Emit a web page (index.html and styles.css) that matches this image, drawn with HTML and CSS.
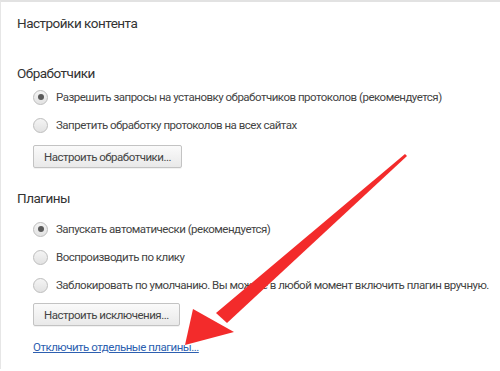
FILE: index.html
```html
<!DOCTYPE html>
<html>
<head>
<meta charset="utf-8">
<link rel="stylesheet" href="styles.css">
</head>
<body>
<div class="page">
  <h1 class="title">Настройки контента</h1>
  <section class="section handlers">
    <h2 class="section-title">Обработчики</h2>
    <div class="option"><span class="radio checked"></span><span>Разрешить запросы на установку обработчиков протоколов (рекомендуется)</span></div>
    <div class="option"><span class="radio"></span><span>Запретить обработку протоколов на всех сайтах</span></div>
    <button class="btn">Настроить обработчики...</button>
  </section>
  <section class="section plugins">
    <h2 class="section-title">Плагины</h2>
    <div class="option"><span class="radio checked"></span><span>Запускать автоматически (рекомендуется)</span></div>
    <div class="option"><span class="radio"></span><span>Воспроизводить по клику</span></div>
    <div class="option"><span class="radio"></span><span>Заблокировать по умолчанию. Вы можете в любой момент включить плагин вручную.</span></div>
    <button class="btn">Настроить исключения...</button>
    <a class="link" href="#">Отключить отдельные плагины...</a>
  </section>
</div>
<svg class="arrow" width="500" height="371" viewBox="0 0 500 371">
  <polygon fill="#f32b2b" points="405,154 407,156 227,323 216,313"/>
  <polygon fill="#f32b2b" points="185,345 193,309 234,332"/>
</svg>
</body>
</html>
```
FILE: styles.css
```css
html, body {
  margin: 0;
  padding: 0;
  background: #fff;
}
body {
  width: 500px;
  height: 371px;
  overflow: hidden;
  position: relative;
  font-family: Roboto, "Open Sans", sans-serif;
  color: #333;
  font-size: 11.5px;
  letter-spacing: -0.5px;
}
.page {
  border-top: 2px solid #e2e2e2;
  border-left: 1px solid #e6e6e6;
  height: 369px;
  box-sizing: border-box;
  padding: 0 0 0 16px;
}
.title {
  margin: 0;
  font-weight: normal;
  font-size: 13.5px;
  letter-spacing: -0.5px;
  line-height: 20px;
  padding-top: 11px;
  color: #333;
}
.section-title {
  margin: 0;
  font-weight: normal;
  font-size: 13.5px;
  letter-spacing: -0.5px;
  line-height: 20px;
  color: #333;
}
.handlers { margin-top: 30px; }
.plugins { margin-top: 20px; }
.option {
  display: flex;
  align-items: center;
  gap: 8px;
  margin-left: 16px;
  height: 28px;
  white-space: nowrap;
  color: #444;
}
.handlers .section-title { margin-bottom: 0; }
.plugins .section-title { margin-bottom: 7px; }
.radio {
  width: 13px;
  height: 13px;
  border-radius: 50%;
  border: 1px solid #bdbdbd;
  background: linear-gradient(#f4f4f4, #e2e2e2);
  position: relative;
  flex: none;
}
.radio.checked::after {
  content: "";
  position: absolute;
  left: 3.5px;
  top: 3.5px;
  width: 6px;
  height: 6px;
  border-radius: 50%;
  background: #5a5a5a;
}
.btn {
  display: block;
  margin: 6px 0 0 16px;
  height: 23px;
  padding: 0 10px;
  font-family: inherit;
  font-size: 11.5px;
  letter-spacing: -0.5px;
  color: #444;
  border: 1px solid #c3c3c3;
  border-radius: 2px;
  background: linear-gradient(#fafafa, #e9e9e9);
  box-shadow: 0 1px 0 rgba(0,0,0,0.05);
}
.plugins .btn { margin-top: 4px; }
.link {
  display: inline-block;
  margin: 14px 0 0 16px;
  color: #2d5fb0;
  text-decoration: underline;
  font-size: 11.5px;
}
.arrow {
  position: absolute;
  left: 0;
  top: 0;
  pointer-events: none;
}
```
